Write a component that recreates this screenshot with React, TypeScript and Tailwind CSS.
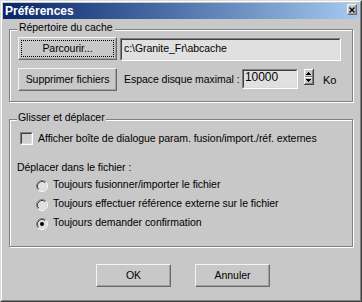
import React from 'react';

const raised =
  'border border-[#6a6a6a] border-t-[#f4f4f4] border-l-[#f4f4f4] shadow-[inset_-1px_-1px_0_#a0a0a0]';

const Button: React.FC<{ label: string; className: string; focused?: boolean }> = ({ label, className, focused }) => (
  <div className={`${raised} bg-[#c8c8c8] flex ${className}`}>
    {focused ? (
      <div className="m-[2px] flex-1 flex items-center justify-center border border-dotted border-black">{label}</div>
    ) : (
      <div className="flex-1 flex items-center justify-center">{label}</div>
    )}
  </div>
);

const Sunken: React.FC<{ className: string; inner: string; children?: React.ReactNode }> = ({ className, inner, children }) => (
  <div className={`border border-white border-t-[#808080] border-l-[#808080] flex ${className}`}>
    <div className={`flex-1 border border-[#dcdcdc] border-t-[#404040] border-l-[#404040] ${inner}`}>{children}</div>
  </div>
);

const Radio: React.FC<{ checked?: boolean }> = ({ checked }) => (
  <svg width="12" height="12" viewBox="0 0 12 12" className="shrink-0">
    <circle cx="6" cy="6" r="4.5" fill="#e0e0e0" />
    <path d="M2.11 9.89 A5.5 5.5 0 0 1 9.89 2.11" fill="none" stroke="#808080" />
    <path d="M9.89 2.11 A5.5 5.5 0 0 1 2.11 9.89" fill="none" stroke="#ffffff" />
    <path d="M2.82 9.18 A4.5 4.5 0 0 1 9.18 2.82" fill="none" stroke="#404040" />
    <path d="M9.18 2.82 A4.5 4.5 0 0 1 2.82 9.18" fill="none" stroke="#dcdcdc" />
    {checked && <circle cx="6" cy="6" r="2" fill="#000" />}
  </svg>
);

const Spinner = () => (
  <svg width="10" height="16" viewBox="0 0 10 16" shapeRendering="crispEdges">
    <rect x="0" y="0" width="10" height="16" fill="#c8c8c8" />
    <rect x="0" y="0" width="10" height="1" fill="#fff" />
    <rect x="0" y="0" width="1" height="16" fill="#fff" />
    <rect x="9" y="0" width="1" height="16" fill="#404040" />
    <rect x="0" y="15" width="10" height="1" fill="#404040" />
    <rect x="8" y="1" width="1" height="14" fill="#808080" />
    <rect x="1" y="14" width="8" height="1" fill="#808080" />
    <rect x="4" y="3" width="1" height="1" fill="#000" />
    <rect x="3" y="4" width="3" height="1" fill="#000" />
    <rect x="2" y="5" width="5" height="1" fill="#000" />
    <rect x="1" y="7" width="7" height="1" fill="#808080" />
    <rect x="1" y="8" width="7" height="1" fill="#fff" />
    <rect x="2" y="10" width="5" height="1" fill="#000" />
    <rect x="3" y="11" width="3" height="1" fill="#000" />
    <rect x="4" y="12" width="1" height="1" fill="#000" />
  </svg>
);

export default function App() {
  return (
    <div className="w-[362px] h-[302px] border border-[#404040] border-t-[#dcdcdc] border-l-[#dcdcdc] bg-[#c8c8c8] text-black text-[10.5px] leading-[13px] tracking-[-0.05px] font-['Liberation_Sans',Arial,sans-serif]">
      <div className="h-full border border-[#808080] border-t-white border-l-white p-[1px] flex flex-col">
        {/* title bar */}
        <div className="h-[16px] flex items-start bg-linear-to-r from-[#0a246a] to-[#a6caf0]">
          <span className="pl-[2px] text-white font-bold text-[12px] leading-[16px] tracking-normal">Préférences</span>
          <div className={`ml-auto mr-[2px] mt-[1px] w-[10px] h-[11px] ${raised} bg-[#c8c8c8] flex items-center justify-center`}>
            <svg width="6" height="6" viewBox="0 0 6 6">
              <path d="M0.5 0.5 L5.5 5.5 M5.5 0.5 L0.5 5.5" stroke="#000" strokeWidth="1.3" />
            </svg>
          </div>
        </div>

        {/* cache */}
        <fieldset className="mx-[6px] mt-[3px] border border-[#808080] px-[7px] pb-[10px] shadow-[inset_1px_1px_0_#fff,1px_1px_0_#fff]">
          <legend className="px-[2px] pb-[4px] leading-[11px] bg-[#c8c8c8]">Répertoire du cache</legend>
          <div className="flex items-start ml-[1px]">
            <Button label="Parcourir..." className="w-[99px] h-[23px]" focused />
            <Sunken className="ml-[3px] mt-[1px] w-[221px] h-[23px]" inner="bg-[#e0e0e0] pl-[2px] pt-[2px]">
              c:\Granite_Fr\abcache
            </Sunken>
          </div>
          <div className="flex items-start ml-[1px] mt-[7px]">
            <Button label="Supprimer fichiers" className="w-[99px] h-[23px]" />
            <span className="ml-[7px] mt-[5px] w-[118px] whitespace-nowrap">Espace disque maximal :</span>
            <Sunken className="mt-[1px] w-[56px] h-[20px]" inner="bg-[#e0e0e0] pl-[1px] leading-[12px] text-[12px]">
              10000
            </Sunken>
            <div className="ml-[6px] mt-[1px] flex">
              <Spinner />
            </div>
            <span className="ml-[9px] mt-[6px] text-[11px]">Ko</span>
          </div>
        </fieldset>

        {/* drag & drop */}
        <fieldset className="mx-[6px] mt-[10px] border border-[#808080] px-[7px] pb-[14px] shadow-[inset_1px_1px_0_#fff,1px_1px_0_#fff]">
          <legend className="px-[1px] pb-[4px] leading-[11px] bg-[#c8c8c8]">Glisser et déplacer</legend>
          <div className="flex items-center mt-[5px] ml-[3px] h-[13px]">
            <Sunken className="w-[13px] h-[13px]" inner="bg-[#d0d0d0]" />
            <span className="ml-[5px] whitespace-nowrap">Afficher boîte de dialogue param. fusion/import./réf. externes</span>
          </div>
          <div className="mt-[16px]">Déplacer dans le fichier :</div>
          <div className="mt-[1px] flex flex-col">
            {[
              ['Toujours fusionner/importer le fichier', false],
              ['Toujours effectuer référence externe sur le fichier', false],
              ['Toujours demander confirmation', true],
            ].map(([label, checked]) => (
              <div key={label as string} className="h-[19px] flex items-start ml-[19px]">
                <div className="mt-[5px] flex">
                  <Radio checked={checked as boolean} />
                </div>
                <span className="ml-[5px] mt-[3px] whitespace-nowrap">{label}</span>
              </div>
            ))}
          </div>
        </fieldset>

        <div className="mt-[17px] pl-[93px] flex gap-[24px]">
          <Button label="OK" className="w-[75px] h-[23px]" />
          <Button label="Annuler" className="w-[75px] h-[23px]" />
        </div>
      </div>
    </div>
  );
}
